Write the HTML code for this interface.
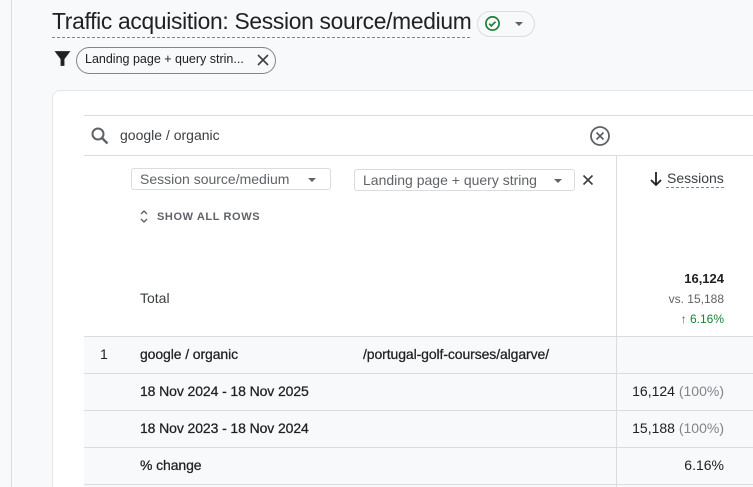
<!DOCTYPE html>
<html style="overflow:hidden;height:487px"><head><style>
body{margin:0;width:753px;height:487px;background:#f8f9fa;font-family:"Liberation Sans",sans-serif;color:#202124;position:relative;overflow:hidden}
.a{position:absolute;white-space:nowrap}
.vl{position:absolute;left:11px;top:0;width:1px;height:487px;background:#dadce0}
.card{position:absolute;left:52px;top:90px;width:720px;height:410px;background:#fff;border:1px solid #e3e5e8;border-radius:8px}
.hl{position:absolute;left:84px;width:669px;height:1px;background:#dadce0}
.gray{position:absolute;left:84px;width:669px;background:#f8f9fa}
.t{font-size:14px;letter-spacing:-0.1px;color:#202124;-webkit-text-stroke:0.25px #202124}
.dd{position:absolute;border:1px solid #dadce0;border-radius:3px;height:22px;font-size:14px;color:#5f6368;line-height:21px;padding-left:8px;box-sizing:border-box}
.tri{position:absolute;width:0;height:0;border-left:4px solid transparent;border-right:4px solid transparent;border-top:4px solid #5f6368}
</style></head><body>
<div class="vl"></div>
<div class="a" style="left:52px;top:8px;font-size:22.8px;color:#202124;letter-spacing:-0.3px">Traffic acquisition: Session source/medium</div>
<div class="a" style="left:52px;top:37px;width:418px;border-top:1.5px dashed #80868b"></div>
<div class="a" style="left:477px;top:11px;width:58px;height:26px;border:1px solid #dadce0;border-radius:13px;box-sizing:border-box"></div>
<svg class="a" style="left:484px;top:15px" width="17" height="17" viewBox="0 0 18 18"><circle cx="9" cy="9" r="7" fill="none" stroke="#188038" stroke-width="1.8"/><path d="M5.5 9.2l2.3 2.3 4.4-4.4" fill="none" stroke="#188038" stroke-width="1.8"/></svg>
<div class="tri" style="left:515px;top:22px"></div>
<svg class="a" style="left:54px;top:50px" width="17" height="17" viewBox="0 0 15 15"><path d="M0.5 1h14L9.2 8v6H5.8V8z" fill="#202124"/></svg>
<div class="a" style="left:76px;top:47px;width:200px;height:27px;border:1px solid #80868b;border-radius:14px;box-sizing:border-box"></div>
<div class="a" style="left:85px;top:52px;font-size:12.5px">Landing page + query strin...</div>
<svg class="a" style="left:256px;top:53px" width="14" height="14" viewBox="0 0 14 14"><path d="M2 2l10 10M12 2L2 12" stroke="#3c4043" stroke-width="1.6"/></svg>
<div class="card"></div>
<div class="hl" style="top:115px"></div>
<svg class="a" style="left:90px;top:126px" width="20" height="20" viewBox="0 0 20 20"><circle cx="8" cy="8" r="5.5" fill="none" stroke="#5f6368" stroke-width="2"/><path d="M12 12l5.5 5.5" stroke="#5f6368" stroke-width="2.4"/></svg>
<div class="a" style="left:120px;top:127px;font-size:14px;color:#3c4043">google / organic</div>
<svg class="a" style="left:589px;top:125px" width="22" height="22" viewBox="0 0 22 22"><circle cx="11" cy="11" r="9" fill="none" stroke="#5f6368" stroke-width="1.8"/><path d="M7.5 7.5l7 7M14.5 7.5l-7 7" stroke="#5f6368" stroke-width="1.8"/></svg>
<div class="hl" style="top:155px"></div>
<div class="a" style="left:616px;top:155px;width:1px;height:332px;background:#dadce0"></div>
<div class="dd" style="left:131px;top:168px;width:200px">Session source/medium</div>
<div class="tri" style="left:308px;top:178px"></div>
<div class="dd" style="left:354px;top:169px;width:221px">Landing page + query string</div>
<div class="tri" style="left:554px;top:179px"></div>
<svg class="a" style="left:582px;top:174px" width="12" height="12" viewBox="0 0 12 12"><path d="M1.5 1.5l9 9M10.5 1.5l-9 9" stroke="#3c4043" stroke-width="1.6"/></svg>
<svg class="a" style="left:649px;top:171px" width="14" height="16" viewBox="0 0 14 16"><path d="M7 1v13M2 9l5 5 5-5" fill="none" stroke="#202124" stroke-width="1.8"/></svg>
<div class="a" style="left:667px;top:170px;font-size:14px;color:#3c4043">Sessions</div>
<div class="a" style="left:666px;top:187px;width:58px;border-top:1px dashed #80868b"></div>
<svg class="a" style="left:139px;top:209px" width="10" height="15" viewBox="0 0 10 15"><path d="M2 5l3-3 3 3M2 10l3 3 3-3" fill="none" stroke="#5f6368" stroke-width="1.4"/></svg>
<div class="a" style="left:157px;top:211px;font-size:11px;color:#5f6368;letter-spacing:0.6px;font-weight:bold">SHOW ALL ROWS</div>
<div class="a" style="left:140px;top:290px;font-size:14px;color:#3c4043">Total</div>
<div class="a" style="right:29px;top:271px;font-size:13px;font-weight:bold">16,124</div>
<div class="a" style="right:29px;top:292px;font-size:12px;color:#5f6368">vs. 15,188</div>
<div class="a" style="right:29px;top:312px;font-size:12px;color:#188038">↑ 6.16%</div>
<div class="gray" style="top:336px;height:151px"></div>
<div class="hl" style="top:336px"></div>
<div class="hl" style="top:373px"></div>
<div class="hl" style="top:410px"></div>
<div class="hl" style="top:447px"></div>
<div class="hl" style="top:484px"></div>
<div class="a" style="left:616px;top:336px;width:1px;height:151px;background:#dadce0"></div>
<div class="a" style="left:100px;top:346px;font-size:14px">1</div>
<div class="a t" style="left:140px;top:346px">google / organic</div>
<div class="a t" style="left:363px;top:346px">/portugal-golf-courses/algarve/</div>
<div class="a t" style="left:140px;top:383px">18 Nov 2024 - 18 Nov 2025</div>
<div class="a" style="right:29px;top:383px;font-size:14px">16,124 <span style="color:#80868b">(100%)</span></div>
<div class="a t" style="left:140px;top:420px">18 Nov 2023 - 18 Nov 2024</div>
<div class="a" style="right:29px;top:420px;font-size:14px">15,188 <span style="color:#80868b">(100%)</span></div>
<div class="a t" style="left:140px;top:457px">% change</div>
<div class="a" style="right:29px;top:457px;font-size:14px">6.16%</div>
</body></html>
